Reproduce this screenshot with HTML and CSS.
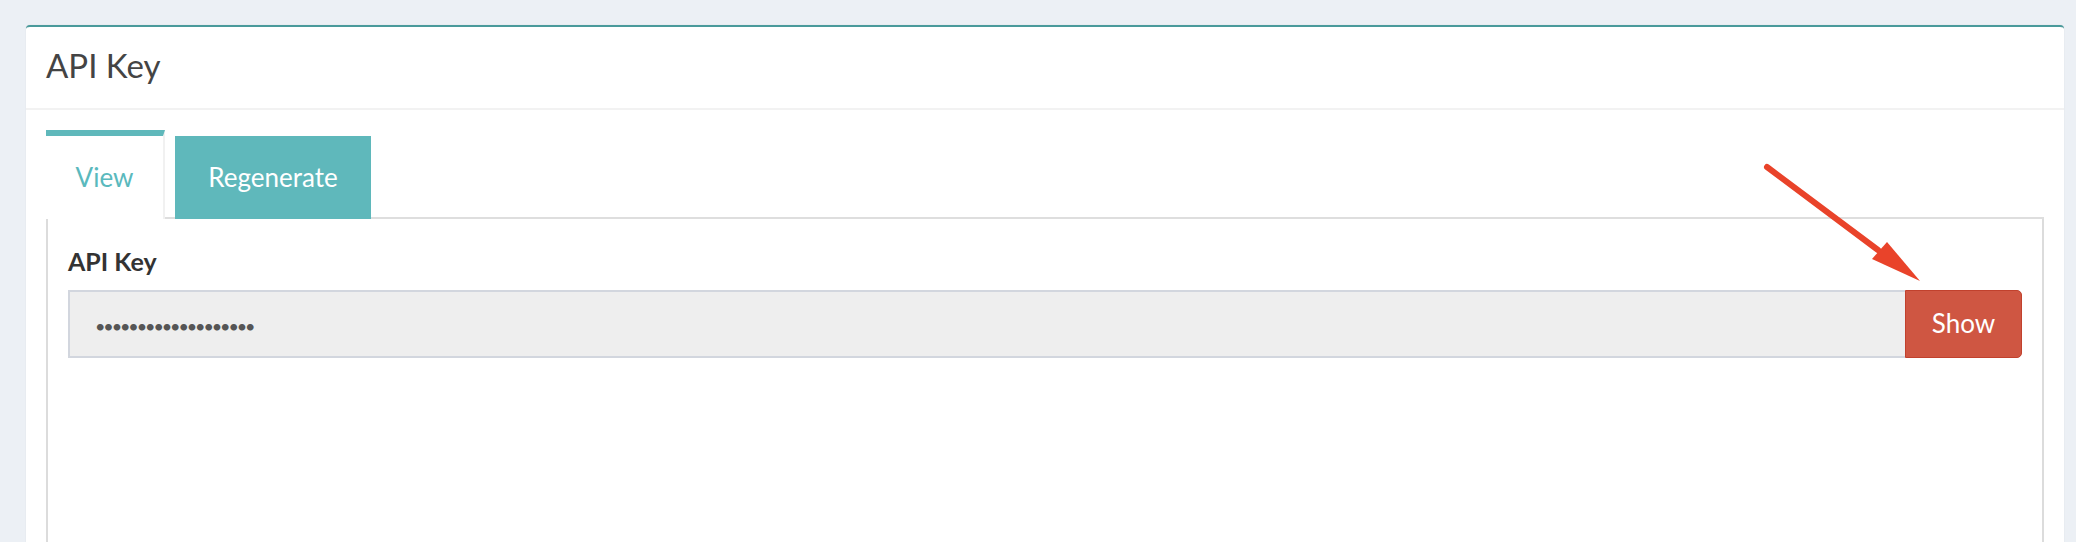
FILE: index.html
```html
<!DOCTYPE html>
<html lang="en">
<head>
<meta charset="utf-8">
<title>API Key</title>
<link rel="stylesheet" href="styles.css">
</head>
<body>
<div class="page">
  <section class="card">
    <header class="card-header">
      <h1 class="card-title">API Key</h1>
    </header>
    <div class="card-body">
      <nav class="tabs">
        <a class="tab tab-active">View</a>
        <a class="tab tab-alt">Regenerate</a>
      </nav>
      <div class="pane">
        <label class="field-label">API Key</label>
        <div class="input-group">
          <div class="key-input"><span class="dots">•••••••••••••••••••</span></div>
          <button class="btn-show">Show</button>
        </div>
      </div>
    </div>
  </section>
</div>
<svg class="annotation" width="2076" height="542" viewBox="0 0 2076 542">
  <line x1="1767" y1="167" x2="1878" y2="250" stroke="#e9432a" stroke-width="6" stroke-linecap="round"/>
  <polygon points="1920,281 1872,259 1887,242" fill="#e9432a"/>
</svg>
</body>
</html>
```
FILE: styles.css
```css
html, body {
  margin: 0;
  padding: 0;
  height: 100%;
  overflow: hidden;
}
body {
  background: #ecf0f5;
  font-family: Lato, "Open Sans", "Noto Sans", sans-serif;
  position: relative;
}
.page {
  box-sizing: border-box;
  height: 100vh;
  padding: 25px 12px 0 26px;
  display: flex;
  flex-direction: column;
}
.card {
  flex: 1;
  display: flex;
  flex-direction: column;
  background: #fff;
  border-top: 2px solid #4a9a9b;
  border-radius: 4px 4px 0 0;
  box-shadow: 0 0 1px rgba(0, 0, 0, 0.18);
}
.card-header {
  border-bottom: 2px solid #f2f2f2;
  padding: 0 20px 4px;
}
.card-title {
  margin: 0;
  font-weight: 400;
  font-size: 33px;
  line-height: 77px;
  color: #444;
}
.card-body {
  flex: 1;
  display: flex;
  flex-direction: column;
  padding: 20px 20px 0;
}
.tabs {
  display: flex;
  align-items: flex-end;
  border-bottom: 2px solid #dedede;
}
.tab {
  display: flex;
  align-items: center;
  justify-content: center;
  font-size: 26px;
  line-height: 1.2;
  margin-bottom: -2px;
  box-sizing: border-box;
}
.tab-active {
  width: 119px;
  height: 89px;
  border-top: 6px solid #5fb8bb;
  border-right: 2px solid #f1f1f1;
  background: #fff;
  color: #5ab9bd;
}
.tab-alt {
  width: 196px;
  height: 83px;
  margin-left: 10px;
  background: #5fb8bb;
  color: #fff;
}
.pane {
  flex: 1;
  border-left: 2px solid #dcdcdc;
  border-right: 2px solid #dcdcdc;
  padding: 27px 20px 0;
}
.field-label {
  display: block;
  font-weight: 700;
  font-size: 25px;
  line-height: 1.2;
  color: #333;
  margin-bottom: 14px;
}
.input-group {
  display: flex;
  height: 68px;
}
.key-input {
  flex: 1;
  display: flex;
  align-items: center;
  background: #eeeeee;
  border: 2px solid #d2d6de;
  border-right: none;
  padding-left: 25px;
}
.dots {
  color: #555;
  font-size: 18px;
  letter-spacing: -2.1px;
  line-height: 1;
  padding-top: 3px;
}
.btn-show {
  width: 117px;
  background: #cf5642;
  border: 1px solid #c1412d;
  border-radius: 0 5px 5px 0;
  color: #fff;
  font-family: Lato, "Open Sans", "Noto Sans", sans-serif;
  font-size: 26px;
  line-height: 1.2;
  padding: 0;
}
.annotation {
  position: absolute;
  left: 0;
  top: 0;
  pointer-events: none;
}
```
